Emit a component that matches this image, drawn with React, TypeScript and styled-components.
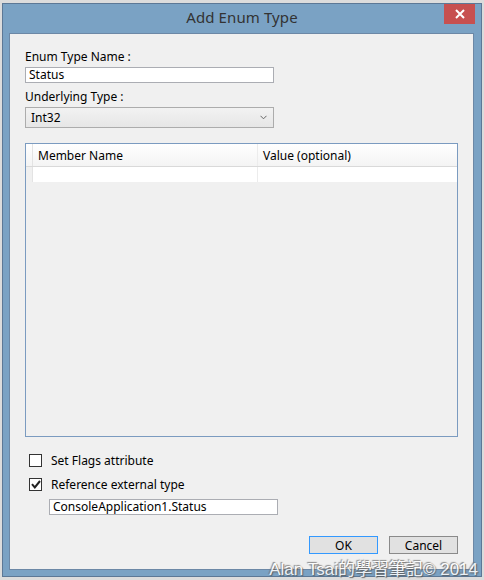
import React from 'react';
import styled, { createGlobalStyle } from 'styled-components';

const GlobalStyle = createGlobalStyle`
  html, body {
    margin: 0;
    padding: 0;
    background: #dcdcdc;
  }
  body {
    font-family: "Noto Sans", "Open Sans", sans-serif;
    font-size: 12px;
    color: #000;
  }
`;

const Page = styled.div`
  position: relative;
  width: 484px;
  height: 580px;
  padding: 3px 2px 3px 2px;
  box-sizing: border-box;
  overflow: hidden;
`;

const Window = styled.div`
  display: flex;
  flex-direction: column;
  height: 100%;
  background: #7aa2c4;
  border: 1px solid #5c7896;
  box-sizing: border-box;
`;

const TitleBar = styled.div`
  display: grid;
  grid-template-columns: 1fr auto 1fr;
  align-items: start;
  height: 29px;
  flex-shrink: 0;
`;

const Title = styled.div`
  grid-column: 2;
  padding-top: 3px;
  font-size: 15px;
  color: #333;
  letter-spacing: 0.1px;
`;

const CloseButton = styled.div`
  grid-column: 3;
  justify-self: end;
  display: flex;
  align-items: center;
  justify-content: center;
  width: 31px;
  height: 20px;
  margin-right: 6px;
  background: #c75050;
`;

const Body = styled.div`
  flex: 1;
  display: flex;
  flex-direction: column;
  margin: 0 7px 6px 6px;
  padding: 15px 15px 0 15px;
  background: #f0f0f0;
  border: 1px solid #6c88a6;
`;

const Label = styled.div<{ $top?: number }>`
  line-height: 16px;
  margin-top: ${(p) => p.$top ?? 0}px;
`;

const TextInput = styled.div<{ $width: number; $indent?: number; $top?: number }>`
  width: ${(p) => p.$width}px;
  height: 16px;
  margin: ${(p) => p.$top ?? 2}px 0 0 ${(p) => p.$indent ?? 0}px;
  padding: 0 3px;
  box-sizing: border-box;
  background: #fff;
  border: 1px solid #abadb3;
  line-height: 14px;
  white-space: nowrap;
`;

const Select = styled.div`
  display: flex;
  align-items: center;
  justify-content: space-between;
  width: 249px;
  height: 21px;
  margin-top: 2px;
  padding: 0 6px 0 5px;
  box-sizing: border-box;
  background: linear-gradient(#f2f2f2, #e6e6e6);
  border: 1px solid #acacac;
`;

const Grid = styled.div`
  width: 433px;
  height: 294px;
  margin-top: 15px;
  box-sizing: border-box;
  border: 1px solid #7b9bc0;
  background: #f0f0f0;
`;

const GridRow = styled.div<{ $header?: boolean }>`
  display: grid;
  grid-template-columns: 7px 225px 1fr;
  height: ${(p) => (p.$header ? 23 : 16)}px;
  background: ${(p) => (p.$header ? 'linear-gradient(#ffffff, #f4f4f4)' : '#fff')};
  border-bottom: 1px solid ${(p) => (p.$header ? '#d9d9d9' : '#f0f0f0')};
  box-sizing: border-box;
`;

const RowHead = styled.div<{ $header?: boolean }>`
  background: ${(p) => (p.$header ? 'transparent' : '#f0f0f0')};
  border-right: 1px solid #e3e3e3;
`;

const Cell = styled.div<{ $last?: boolean }>`
  display: flex;
  align-items: center;
  padding-left: 5px;
  border-right: ${(p) => (p.$last ? 'none' : '1px solid #ececec')};
`;

const CheckRow = styled.div<{ $top: number }>`
  display: flex;
  align-items: center;
  gap: 9px;
  height: 13px;
  margin: ${(p) => p.$top}px 0 0 4px;
`;

const Box = styled.div`
  display: flex;
  align-items: center;
  justify-content: center;
  width: 13px;
  height: 13px;
  box-sizing: border-box;
  background: #fff;
  border: 1px solid #333;
`;

const Buttons = styled.div`
  display: flex;
  justify-content: flex-end;
  gap: 11px;
  width: 433px;
  margin-top: 21px;
`;

const Button = styled.div<{ $default?: boolean }>`
  display: flex;
  align-items: center;
  justify-content: center;
  width: 69px;
  height: 18px;
  box-sizing: border-box;
  background: #e1e1e1;
  border: 1px solid ${(p) => (p.$default ? '#3399ff' : '#8a8a8a')};
`;

const Watermark = styled.div`
  position: absolute;
  right: 6px;
  bottom: 0;
  font-family: "Liberation Sans", "Noto Sans CJK TC", sans-serif;
  font-size: 17px;
  line-height: 20px;
  color: #fff;
  opacity: 0.85;
  text-shadow: 1px 1px 1px #555, -1px -1px 1px #777;
  white-space: nowrap;
`;

const Chevron = () => (
  <svg width="7" height="5" viewBox="0 0 7 5">
    <path d="M0.5 0.8 L3.5 3.8 L6.5 0.8" fill="none" stroke="#666" strokeWidth="1" />
  </svg>
);

const CloseX = () => (
  <svg width="10" height="10" viewBox="0 0 10 10">
    <path d="M1 1 L9 9 M9 1 L1 9" stroke="#fff" strokeWidth="2" />
  </svg>
);

const CheckMark = () => (
  <svg width="10" height="9" viewBox="0 0 10 9">
    <path d="M1 4.2 L3.8 7.4 L9 1" fill="none" stroke="#222" strokeWidth="2" />
  </svg>
);

const App: React.FC = () => {
  return (
    <Page>
      <GlobalStyle />
      <Window>
        <TitleBar>
          <Title>Add Enum Type</Title>
          <CloseButton>
            <CloseX />
          </CloseButton>
        </TitleBar>
        <Body>
          <Label>Enum Type Name :</Label>
          <TextInput $width={249}>Status</TextInput>
          <Label $top={6}>Underlying Type :</Label>
          <Select>
            <span>Int32</span>
            <Chevron />
          </Select>

          <Grid>
            <GridRow $header>
              <RowHead $header />
              <Cell>Member Name</Cell>
              <Cell $last>Value (optional)</Cell>
            </GridRow>
            <GridRow>
              <RowHead />
              <Cell />
              <Cell $last />
            </GridRow>
          </Grid>

          <CheckRow $top={17}>
            <Box />
            <span>Set Flags attribute</span>
          </CheckRow>
          <CheckRow $top={11}>
            <Box>
              <CheckMark />
            </Box>
            <span>Reference external type</span>
          </CheckRow>
          <TextInput $width={229} $indent={24} $top={8}>
            ConsoleApplication1.Status
          </TextInput>

          <Buttons>
            <Button $default>OK</Button>
            <Button>Cancel</Button>
          </Buttons>
        </Body>
      </Window>
      <Watermark>Alan Tsai的學習筆記© 2014</Watermark>
    </Page>
  );
};

export default App;
